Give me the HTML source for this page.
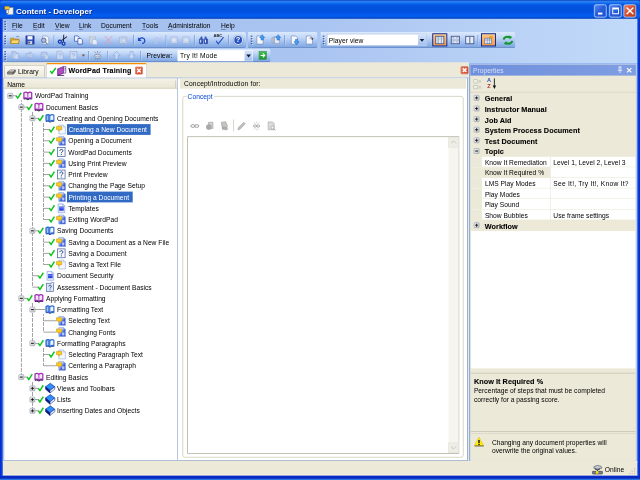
<!DOCTYPE html>
<html><head><meta charset="utf-8"><title>Content - Developer</title><style>
html,body{margin:0;padding:0;}
body{width:640px;height:480px;overflow:hidden;position:relative;background:#0a3fd0;}
#w{position:absolute;left:0;top:0;width:640px;height:480px;overflow:hidden;filter:blur(0.3px);}
#s{position:absolute;left:0;top:0;width:6400px;height:4800px;transform:scale(0.1);transform-origin:0 0;font-family:"Liberation Sans",sans-serif;color:#000;}

#s{font-size:67px;}
.a{position:absolute;}
.t{position:absolute;white-space:nowrap;line-height:100px;height:100px;}
.b{font-weight:bold;letter-spacing:2.8px;}
svg{position:absolute;overflow:visible;}
</style></head><body><div id="w"><div id="s">
<div class="a" style="left:0px;top:0px;width:6400px;height:4800px;background:#0a46dc;"></div>
<div class="a" style="left:0px;top:0px;width:6400px;height:187.5px;background:linear-gradient(to bottom,#0a48b8 0%,#2c7ef4 8%,#2478f6 12%,#0e68ee 18%,#045ce6 24%,#0252de 32%,#0250de 58%,#0356e8 72%,#055ef0 84%,#0458e2 91%,#0348c8 96%,#023cae 100%);border-radius:40px 40px 0 0;"></div>
<div class="t " style="left:160px;top:64px;font-weight:bold;font-size:80px;color:#fff;text-shadow:6px 6px 5px #0a2a80;letter-spacing:0px;">Content - Developer</div>
<svg style="left:44px;top:54px" width="96" height="96" viewBox="0 0 11 11"><rect x="3.5" y="2.5" width="6.5" height="8" fill="#f4f4ee" stroke="#8a8a80" stroke-width="0.6"/><rect x="0.5" y="1" width="5" height="4" fill="#f2c438" stroke="#a07a10" stroke-width="0.5"/><rect x="2" y="5" width="2.4" height="4" fill="#e8e8f4" stroke="#556" stroke-width="0.5"/></svg>
<div class="a" style="left:5940px;top:44px;width:126px;height:131px;background:linear-gradient(135deg,#5a8cf2 0%,#2a5fdc 45%,#1f4fc8 100%);border:7px solid #e8eefc;border-radius:20px;box-sizing:border-box;"></div>
<div class="a" style="left:6090px;top:44px;width:126px;height:131px;background:linear-gradient(135deg,#5a8cf2 0%,#2a5fdc 45%,#1f4fc8 100%);border:7px solid #e8eefc;border-radius:20px;box-sizing:border-box;"></div>
<div class="a" style="left:6235px;top:44px;width:126px;height:131px;background:linear-gradient(135deg,#e9866a 0%,#d8512c 45%,#c23a14 100%);border:7px solid #e8eefc;border-radius:20px;box-sizing:border-box;"></div>
<div class="a" style="left:5980px;top:126px;width:44px;height:19px;background:#fff;"></div>
<div class="a" style="left:6123px;top:76px;width:66px;height:66px;border:9px solid #fff;border-top-width:19px;box-sizing:border-box;"></div>
<svg style="left:6263px;top:72px" width="74" height="74" viewBox="0 0 8 8"><path d="M0.8 0.8 L7.2 7.2 M7.2 0.8 L0.8 7.2" stroke="#fff" stroke-width="1.5" stroke-linecap="round"/></svg>
<div class="a" style="left:25px;top:187.5px;width:6351px;height:445px;background:linear-gradient(to right,#a2beef 0%,#aac5f1 50%,#c2daf9 100%);"></div>
<div class="a" style="left:51px;top:217.5px;width:15px;height:11px;background:rgba(255,255,255,0.85);"></div>
<div class="a" style="left:44px;top:211.5px;width:16px;height:11px;background:#27418a;"></div>
<div class="a" style="left:51px;top:242.5px;width:15px;height:11px;background:rgba(255,255,255,0.85);"></div>
<div class="a" style="left:44px;top:236.5px;width:16px;height:11px;background:#27418a;"></div>
<div class="a" style="left:51px;top:267.5px;width:15px;height:11px;background:rgba(255,255,255,0.85);"></div>
<div class="a" style="left:44px;top:261.5px;width:16px;height:11px;background:#27418a;"></div>
<div class="a" style="left:51px;top:292.5px;width:15px;height:11px;background:rgba(255,255,255,0.85);"></div>
<div class="a" style="left:44px;top:286.5px;width:16px;height:11px;background:#27418a;"></div>
<div class="t" style="left:120px;top:203px;"><span style="border-bottom:5px solid #445;display:inline-block;line-height:74px">F</span>ile</div>
<div class="t" style="left:330px;top:203px;"><span style="border-bottom:5px solid #445;display:inline-block;line-height:74px">E</span>dit</div>
<div class="t" style="left:550px;top:203px;"><span style="border-bottom:5px solid #445;display:inline-block;line-height:74px">V</span>iew</div>
<div class="t" style="left:790px;top:203px;"><span style="border-bottom:5px solid #445;display:inline-block;line-height:74px">L</span>ink</div>
<div class="t" style="left:1010px;top:203px;">D<span style="border-bottom:5px solid #445;display:inline-block;line-height:74px">o</span>cument</div>
<div class="t" style="left:1420px;top:203px;"><span style="border-bottom:5px solid #445;display:inline-block;line-height:74px">T</span>ools</div>
<div class="t" style="left:1680px;top:203px;"><span style="border-bottom:5px solid #445;display:inline-block;line-height:74px">A</span>dministration</div>
<div class="t" style="left:2210px;top:203px;"><span style="border-bottom:5px solid #445;display:inline-block;line-height:74px">H</span>elp</div>
<div class="a" style="left:25px;top:320px;width:2435px;height:160px;background:linear-gradient(to bottom,#dbe9fd 0%,#c3d8f8 35%,#9dbdee 70%,#7fa7e2 100%);border-radius:0 20px 20px 0;border-bottom:8px solid #5a7fc0;box-sizing:border-box;"></div>
<div class="a" style="left:51px;top:362.5px;width:15px;height:11px;background:rgba(255,255,255,0.85);"></div>
<div class="a" style="left:44px;top:356.5px;width:16px;height:11px;background:#27418a;"></div>
<div class="a" style="left:51px;top:387.5px;width:15px;height:11px;background:rgba(255,255,255,0.85);"></div>
<div class="a" style="left:44px;top:381.5px;width:16px;height:11px;background:#27418a;"></div>
<div class="a" style="left:51px;top:412.5px;width:15px;height:11px;background:rgba(255,255,255,0.85);"></div>
<div class="a" style="left:44px;top:406.5px;width:16px;height:11px;background:#27418a;"></div>
<div class="a" style="left:51px;top:437.5px;width:15px;height:11px;background:rgba(255,255,255,0.85);"></div>
<div class="a" style="left:44px;top:431.5px;width:16px;height:11px;background:#27418a;"></div>
<div class="a" style="left:537px;top:350px;width:7px;height:100px;background:#6a8ccc;"></div>
<div class="a" style="left:544px;top:355px;width:6px;height:100px;background:rgba(240,246,255,0.55);"></div>
<div class="a" style="left:1332px;top:350px;width:7px;height:100px;background:#6a8ccc;"></div>
<div class="a" style="left:1339px;top:355px;width:6px;height:100px;background:rgba(240,246,255,0.55);"></div>
<div class="a" style="left:1657px;top:350px;width:7px;height:100px;background:#6a8ccc;"></div>
<div class="a" style="left:1664px;top:355px;width:6px;height:100px;background:rgba(240,246,255,0.55);"></div>
<div class="a" style="left:1941px;top:350px;width:7px;height:100px;background:#6a8ccc;"></div>
<div class="a" style="left:1948px;top:355px;width:6px;height:100px;background:rgba(240,246,255,0.55);"></div>
<div class="a" style="left:2282px;top:350px;width:7px;height:100px;background:#6a8ccc;"></div>
<div class="a" style="left:2289px;top:355px;width:6px;height:100px;background:rgba(240,246,255,0.55);"></div>
<div class="a" style="left:2480px;top:320px;width:695px;height:160px;background:linear-gradient(to bottom,#dbe9fd 0%,#c3d8f8 35%,#9dbdee 70%,#7fa7e2 100%);border-radius:0 20px 20px 0;border-bottom:8px solid #5a7fc0;box-sizing:border-box;"></div>
<div class="a" style="left:2515px;top:362.5px;width:15px;height:11px;background:rgba(255,255,255,0.85);"></div>
<div class="a" style="left:2508px;top:356.5px;width:16px;height:11px;background:#27418a;"></div>
<div class="a" style="left:2515px;top:387.5px;width:15px;height:11px;background:rgba(255,255,255,0.85);"></div>
<div class="a" style="left:2508px;top:381.5px;width:16px;height:11px;background:#27418a;"></div>
<div class="a" style="left:2515px;top:412.5px;width:15px;height:11px;background:rgba(255,255,255,0.85);"></div>
<div class="a" style="left:2508px;top:406.5px;width:16px;height:11px;background:#27418a;"></div>
<div class="a" style="left:2515px;top:437.5px;width:15px;height:11px;background:rgba(255,255,255,0.85);"></div>
<div class="a" style="left:2508px;top:431.5px;width:16px;height:11px;background:#27418a;"></div>
<div class="a" style="left:2844px;top:350px;width:7px;height:100px;background:#6a8ccc;"></div>
<div class="a" style="left:2851px;top:355px;width:6px;height:100px;background:rgba(240,246,255,0.55);"></div>
<div class="a" style="left:3204px;top:320px;width:1950px;height:160px;background:linear-gradient(to bottom,#dbe9fd 0%,#c3d8f8 35%,#9dbdee 70%,#7fa7e2 100%);border-radius:0 20px 20px 0;border-bottom:8px solid #5a7fc0;box-sizing:border-box;"></div>
<div class="a" style="left:3235px;top:362.5px;width:15px;height:11px;background:rgba(255,255,255,0.85);"></div>
<div class="a" style="left:3228px;top:356.5px;width:16px;height:11px;background:#27418a;"></div>
<div class="a" style="left:3235px;top:387.5px;width:15px;height:11px;background:rgba(255,255,255,0.85);"></div>
<div class="a" style="left:3228px;top:381.5px;width:16px;height:11px;background:#27418a;"></div>
<div class="a" style="left:3235px;top:412.5px;width:15px;height:11px;background:rgba(255,255,255,0.85);"></div>
<div class="a" style="left:3228px;top:406.5px;width:16px;height:11px;background:#27418a;"></div>
<div class="a" style="left:3235px;top:437.5px;width:15px;height:11px;background:rgba(255,255,255,0.85);"></div>
<div class="a" style="left:3228px;top:431.5px;width:16px;height:11px;background:#27418a;"></div>
<div class="a" style="left:4776px;top:350px;width:7px;height:100px;background:#6a8ccc;"></div>
<div class="a" style="left:4783px;top:355px;width:6px;height:100px;background:rgba(240,246,255,0.55);"></div>
<div class="a" style="left:25px;top:486px;width:2681px;height:134px;background:linear-gradient(to bottom,#dbe9fd 0%,#c3d8f8 35%,#9dbdee 70%,#7fa7e2 100%);border-radius:0 20px 20px 0;border-bottom:8px solid #5a7fc0;box-sizing:border-box;"></div>
<div class="a" style="left:51px;top:517.5px;width:15px;height:11px;background:rgba(255,255,255,0.85);"></div>
<div class="a" style="left:44px;top:511.5px;width:16px;height:11px;background:#27418a;"></div>
<div class="a" style="left:51px;top:542.5px;width:15px;height:11px;background:rgba(255,255,255,0.85);"></div>
<div class="a" style="left:44px;top:536.5px;width:16px;height:11px;background:#27418a;"></div>
<div class="a" style="left:51px;top:567.5px;width:15px;height:11px;background:rgba(255,255,255,0.85);"></div>
<div class="a" style="left:44px;top:561.5px;width:16px;height:11px;background:#27418a;"></div>
<div class="a" style="left:51px;top:592.5px;width:15px;height:11px;background:rgba(255,255,255,0.85);"></div>
<div class="a" style="left:44px;top:586.5px;width:16px;height:11px;background:#27418a;"></div>
<div class="a" style="left:882px;top:510px;width:7px;height:90px;background:#6a8ccc;"></div>
<div class="a" style="left:889px;top:515px;width:6px;height:90px;background:rgba(240,246,255,0.55);"></div>
<div class="a" style="left:1070px;top:510px;width:7px;height:90px;background:#6a8ccc;"></div>
<div class="a" style="left:1077px;top:515px;width:6px;height:90px;background:rgba(240,246,255,0.55);"></div>
<div class="a" style="left:1401px;top:510px;width:7px;height:90px;background:#6a8ccc;"></div>
<div class="a" style="left:1408px;top:515px;width:6px;height:90px;background:rgba(240,246,255,0.55);"></div>
<svg style="left:100px;top:350px" width="100" height="100" viewBox="0 0 16 16"><path d="M1 5h5l1 1.5h7v7H1z" fill="#e8b02c" stroke="#9a6e10" stroke-width="0.8"/><path d="M3 8h12l-2 5.5H1z" fill="#fbdc6a" stroke="#9a6e10" stroke-width="0.8"/><path d="M10 3c2-1.5 3.5-1 4.5 0.5" stroke="#446" fill="none" stroke-width="0.9"/></svg>
<svg style="left:250px;top:350px" width="100" height="100" viewBox="0 0 16 16"><rect x="1.5" y="1.5" width="13" height="13" fill="#2b49b8" stroke="#10206a" stroke-width="0.9"/><rect x="4" y="1.8" width="8" height="5.4" fill="#f4f6ff"/><rect x="4.5" y="9.5" width="7" height="5" fill="#c8cce0"/><rect x="5.5" y="10.5" width="2" height="3" fill="#223"/></svg>
<svg style="left:400px;top:350px" width="100" height="100" viewBox="0 0 16 16"><path d="M4 1.5h7l3 3v10H4z" fill="#eef2fa" stroke="#7a88a8" stroke-width="0.8"/><circle cx="6" cy="8.500" r="3.600" fill="#a8bcdc" stroke="#4c5c84" stroke-width="1.200"/><path d="M8.6 11.2l3.4 3.4" stroke="#56688c" stroke-width="1.6"/></svg>
<svg style="left:577.5px;top:347.5px" width="105" height="105" viewBox="0 0 16 16"><g transform="rotate(28 8 8)"><path d="M10.800 0.500L6.200 10M5.200 0.500l4.600 9.500" stroke="#20243c" stroke-width="1.500" fill="none"/><circle cx="4.800" cy="12.400" r="2.300" fill="none" stroke="#1034b4" stroke-width="1.800"/><circle cx="11.200" cy="12.400" r="2.300" fill="none" stroke="#1034b4" stroke-width="1.800"/></g></svg>
<svg style="left:735px;top:350px" width="100" height="100" viewBox="0 0 16 16"><path d="M1.500 1.500h5.500l2 2V10H1.500z" fill="#f2f6ff" stroke="#2c4cac" stroke-width="1.100"/><path d="M7 5.500h5l2.200 2.200V14.500H7z" fill="#f2f6ff" stroke="#2c4cac" stroke-width="1.100"/></svg>
<svg style="left:880px;top:350px" width="100" height="100" viewBox="0 0 16 16"><rect x="2" y="3" width="10" height="11" fill="#c9d3e6" stroke="#9fb0d0" stroke-width="0.9"/><rect x="5" y="1.5" width="4" height="3" fill="#d8d2c0"/><path d="M7 7h5l2.4 2.2V15H7z" fill="#e6ecf8" stroke="#a4b4d4" stroke-width="0.9"/></svg>
<svg style="left:1035px;top:350px" width="100" height="100" viewBox="0 0 16 16"><path d="M2 1.500l12 13M14 1.500L2 14.500" stroke="#e49ab0" stroke-width="1.500"/></svg>
<svg style="left:1185px;top:350px" width="100" height="100" viewBox="0 0 16 16"><rect x="1.5" y="3" width="12" height="10.5" rx="1" fill="#c4d2ea" stroke="#9cb0d4" stroke-width="0.9"/><circle cx="8" cy="8.5" r="3" fill="#dbe5f5" stroke="#9cb0d4" stroke-width="0.9"/><rect x="10" y="1.5" width="3" height="2" fill="#b8c8e4"/></svg>
<svg style="left:1370px;top:350px" width="100" height="100" viewBox="0 0 16 16"><path d="M3 7.5C6 3 12 4 12.5 8.5c.3 3-2 5-4.5 5" fill="none" stroke="#1a46c8" stroke-width="2"/><path d="M1.5 3.5v6h6z" fill="#1a46c8"/></svg>
<svg style="left:1520px;top:350px" width="100" height="100" viewBox="0 0 16 16"><path d="M13 7.5C10 3 4 4 3.5 8.5c-.3 3 2 5 4.5 5" fill="none" stroke="#b4c6e8" stroke-width="1.8"/><path d="M14.5 3.5v6h-6z" fill="#b4c6e8"/></svg>
<svg style="left:1690px;top:350px" width="100" height="100" viewBox="0 0 16 16"><rect x="3" y="3" width="10" height="10" fill="#c8d6ee" stroke="#a2b6da" stroke-width="0.9"/><path d="M5.5 8h5M8 5.5v5" stroke="#f4f8ff" stroke-width="1.2"/></svg>
<svg style="left:1810px;top:350px" width="100" height="100" viewBox="0 0 16 16"><rect x="3" y="3" width="10" height="10" fill="#c8d6ee" stroke="#a2b6da" stroke-width="0.9"/><path d="M5.5 8h5" stroke="#f4f8ff" stroke-width="1.2"/></svg>
<svg style="left:1985px;top:350px" width="100" height="100" viewBox="0 0 16 16"><path d="M2.500 6l1.200-3.500h2.300l.500 3.500zM9.500 6l.500-3.500h2.300L13.500 6z" fill="#3c5cc0"/><rect x="1.500" y="6" width="5.500" height="8" rx="1" fill="#2a4cb4" stroke="#182c7c" stroke-width="0.600"/><rect x="9" y="6" width="5.500" height="8" rx="1" fill="#2a4cb4" stroke="#182c7c" stroke-width="0.600"/><rect x="6.500" y="6.500" width="3" height="3" fill="#5878d0"/><rect x="2.800" y="7.500" width="1.600" height="4.800" fill="#f0f4ff"/><rect x="10.300" y="7.500" width="1.600" height="4.800" fill="#f0f4ff"/></svg>
<div class="t" style="left:2135px;top:332px;font-size:42px;font-weight:bold;line-height:50px;height:50px;color:#223;letter-spacing:-1px">ABC</div>
<svg style="left:2145px;top:363px" width="100" height="100" viewBox="0 0 16 16"><path d="M2.500 7.500l3.500 4.500L14.500 1.500" fill="none" stroke="#2a52cc" stroke-width="1.900"/></svg>
<svg style="left:2330px;top:348px" width="104" height="104" viewBox="0 0 16 16"><circle cx="8" cy="8" r="8.200" fill="#7c8cb4"/><circle cx="8" cy="8" r="7.400" fill="#eef2fc"/><circle cx="8" cy="8" r="6" fill="#2450c8"/></svg>
<div class="t" style="left:2358px;top:348px;font-size:75px;font-weight:bold;color:#fff;">?</div>
<svg style="left:2553px;top:350px" width="100" height="100" viewBox="0 0 16 16"><path d="M2.5 1.5h7l3 3v10h-10z" fill="#f4f7fd" stroke="#6a7ea8" stroke-width="0.9"/><path d="M11 -0.5L15 4.2h-2.300V8h-3.400V4.200H7z" fill="#3ea4f4" stroke="#1858c0" stroke-width="0.800"/></svg>
<svg style="left:2713px;top:350px" width="100" height="100" viewBox="0 0 16 16"><path d="M1 4.5l4-1.5v10l-4-1.5z" fill="#b8c4d8" stroke="#7c88a4" stroke-width="0.7"/><path d="M5 2.5h6l2 2v9H5z" fill="#e4eaf6" stroke="#7c88a4" stroke-width="0.8"/><path d="M11 -0.5L15 4.2h-2.300V8h-3.400V4.200H7z" fill="#3ea4f4" stroke="#1858c0" stroke-width="0.800"/></svg>
<svg style="left:2897px;top:350px" width="100" height="100" viewBox="0 0 16 16"><path d="M2.5 1.5h7l3 3v10h-10z" fill="#f4f7fd" stroke="#6a7ea8" stroke-width="0.9"/><path d="M11 15.500L15 10.800h-2.300V7h-3.400v3.800H7z" fill="#3ea4f4" stroke="#1858c0" stroke-width="0.800"/></svg>
<svg style="left:3047px;top:350px" width="100" height="100" viewBox="0 0 16 16"><path d="M2.5 1.5h7l3 3v10h-10z" fill="#f4f7fd" stroke="#6a7ea8" stroke-width="0.9"/><path d="M8 5.5c2-2 4.5-1 4.5 1.5M12.5 7l-2-.6M12.5 7l.8-2" stroke="#223" stroke-width="1.1" fill="none"/></svg>
<div class="a" style="left:3268px;top:337px;width:997px;height:122px;background:#fff;border:6px solid #9ab4e0;box-sizing:border-box;"></div>
<div class="t " style="left:3287px;top:352px;letter-spacing:0.5px">Player view</div>
<div class="a" style="left:4180px;top:343px;width:80px;height:110px;background:linear-gradient(to bottom,#d6e4fb,#a3c0ee);"></div>
<svg style="left:4196px;top:390px" width="48" height="28" viewBox="0 0 10 6"><path d="M0 0h10L5 6z" fill="#101830"/></svg>
<div class="a" style="left:4323px;top:333px;width:150px;height:131px;background:linear-gradient(to bottom,#fdc887,#f99a44);border:9px solid #0a1c80;box-sizing:border-box;"></div>
<div class="a" style="left:4810px;top:333px;width:150px;height:131px;background:linear-gradient(to bottom,#fdc887,#f99a44);border:9px solid #0a1c80;box-sizing:border-box;"></div>
<svg style="left:4348px;top:350px" width="100" height="100" viewBox="0 0 16 16"><rect x="1.500" y="2" width="13" height="12" fill="#e4ecf8" stroke="#3c4e80" stroke-width="1.300"/><path d="M5.5 2v12M10.5 2v12" stroke="#5c6e98" stroke-width="0.9"/><path d="M3 5h1.5M3 7h1.5M3 9h1.5M7 5h2M7 7h2M12 5h1.5M12 7h1.5" stroke="#8a9cc0" stroke-width="0.7"/></svg>
<svg style="left:4503px;top:350px" width="100" height="100" viewBox="0 0 16 16"><rect x="1.500" y="2" width="13" height="12" fill="#e4ecf8" stroke="#3c4e80" stroke-width="1.300"/><path d="M1.5 8h13" stroke="#5c6e98" stroke-width="1"/><path d="M3 4.5h4M9 4.5h4M3 11h4M9 11h4" stroke="#6a80b0" stroke-width="0.9"/></svg>
<svg style="left:4648px;top:350px" width="100" height="100" viewBox="0 0 16 16"><rect x="1.500" y="2" width="13" height="12" fill="#e4ecf8" stroke="#3c4e80" stroke-width="1.300"/><path d="M8 2v12" stroke="#5c6e98" stroke-width="1.6"/></svg>
<svg style="left:4835px;top:350px" width="100" height="100" viewBox="0 0 16 16"><rect x="2" y="5" width="11" height="9" fill="#e6ecf6" stroke="#5c6e98" stroke-width="1"/><path d="M2 8h11M6 5v9M9.5 5v9" stroke="#5c6e98" stroke-width="0.8"/><path d="M9 4l3-2.6 3 2.2-2 2.4z" fill="#f0b020" stroke="#a06c08" stroke-width="0.6"/></svg>
<svg style="left:5021.5px;top:344.5px" width="115" height="115" viewBox="0 0 16 16"><path d="M2 7c.500-3.500 5-5 8.500-2.500" fill="none" stroke="#10962c" stroke-width="2.800"/><path d="M9 1.5l5 1.5-3.5 4z" fill="#149a30"/><path d="M14 9c-.5 3.5-5 5-8.5 2.500" fill="none" stroke="#10962c" stroke-width="2.800"/><path d="M7 14.500l-5-1.500 3.500-4z" fill="#149a30"/></svg>
<svg style="left:105px;top:503px" width="100" height="100" viewBox="0 0 16 16"><path d="M2 2h6l2 2v9H2z" fill="#b9cbea" stroke="#8ea8dc" stroke-width="0.9"/><path d="M8 5h5v9H6" fill="#cbd9f1" stroke="#8ea8dc" stroke-width="0.9"/></svg>
<svg style="left:250px;top:503px" width="100" height="100" viewBox="0 0 16 16"><path d="M2 5h6V2l6 6-6 6v-3H2z" fill="#b9cbea" stroke="#8ea8dc" stroke-width="0.9"/></svg>
<svg style="left:400px;top:503px" width="100" height="100" viewBox="0 0 16 16"><path d="M2 3h9v7H7l-3 3v-3H2z" fill="#b9cbea" stroke="#8ea8dc" stroke-width="0.9"/><path d="M9 6l4 2v6H8" fill="#cbd9f1" stroke="#8ea8dc" stroke-width="0.8"/></svg>
<svg style="left:550px;top:503px" width="100" height="100" viewBox="0 0 16 16"><path d="M3 1.500h7l3 3v10H3z" fill="#cbd9f1" stroke="#8ea8dc" stroke-width="0.9"/><path d="M6 7c0-2.500 4-2.500 4 0 0 1.500-2 1.500-2 3M8 12v1" stroke="#8ea8dc" stroke-width="1.2" fill="none"/></svg>
<svg style="left:685px;top:503px" width="100" height="100" viewBox="0 0 16 16"><rect x="2.500" y="2" width="11" height="12" fill="#cbd9f1" stroke="#8ea8dc" stroke-width="0.9"/><path d="M6 7c0-2.500 4-2.500 4 0 0 1.500-2 1.500-2 3M8 12v1" stroke="#8ea8dc" stroke-width="1.2" fill="none"/></svg>
<svg style="left:816px;top:545px" width="36" height="22" viewBox="0 0 10 6"><path d="M0 0h10L5 6z" fill="#7a6040"/></svg>
<svg style="left:925px;top:503px" width="100" height="100" viewBox="0 0 16 16"><path d="M3 2l3 3M13 2l-3 3M8 1v3" stroke="#5a6a8c" stroke-width="0.9"/><ellipse cx="8" cy="9.500" rx="5.500" ry="3" fill="#e8eef8" stroke="#56688c" stroke-width="0.9"/><path d="M4 9.500h8M5 13l-1.500 2M11 13l1.500 2M8 13.500v2" stroke="#56688c" stroke-width="0.9"/></svg>
<svg style="left:1115px;top:503px" width="100" height="100" viewBox="0 0 16 16"><path d="M8 1.500L14 8h-3.500v6h-5V8H2z" fill="#c6d8f4" stroke="#8ea8dc" stroke-width="1"/></svg>
<svg style="left:1265px;top:503px" width="100" height="100" viewBox="0 0 16 16"><path d="M8 14.500L14 8h-3.500V2h-5v6H2z" fill="#c6d8f4" stroke="#8ea8dc" stroke-width="1"/></svg>
<div class="t " style="left:1466px;top:510px;">Preview:</div>
<div class="a" style="left:1775px;top:502px;width:755px;height:110px;background:#fff;"></div>
<div class="t " style="left:1800px;top:506px;letter-spacing:1.5px">Try It! Mode</div>
<div class="a" style="left:2445px;top:506px;width:80px;height:102px;background:linear-gradient(to bottom,#d6e4fb,#a3c0ee);"></div>
<svg style="left:2462px;top:546px" width="48" height="28" viewBox="0 0 10 6"><path d="M0 0h10L5 6z" fill="#101830"/></svg>
<div class="a" style="left:2588px;top:512px;width:80px;height:84px;background:linear-gradient(to bottom,#3cc04a,#1a9a2a);border:5px solid #127a20;box-sizing:border-box;"></div>
<svg style="left:2600px;top:526px" width="56" height="56" viewBox="0 0 10 10"><path d="M1 5h7M5 1.500L8.500 5 5 8.500" stroke="#fff" stroke-width="1.800" fill="none"/></svg>
<div class="a" style="left:25px;top:623px;width:4667px;height:4000px;background:#ece9d8;"></div>
<div class="a" style="left:4691px;top:632px;width:1685px;height:4000px;background:#b4cdf4;"></div>
<div class="a" style="left:4691px;top:640px;width:12px;height:3970px;background:#86aee6;"></div>
<div class="a" style="left:25px;top:777px;width:4660px;height:8px;background:#9db6dc;"></div>
<div class="a" style="left:40px;top:650px;width:410px;height:126px;background:linear-gradient(to bottom,#fbfaf6,#ece9d8);border:6px solid #b8b8a8;border-bottom:none;border-radius:15px 15px 0 0;box-sizing:border-box;"></div>
<svg style="left:70px;top:671px" width="90" height="90" viewBox="0 0 16 16"><path d="M1 9l5-4h9l-4 4z" fill="#d8d8d8" stroke="#444" stroke-width="0.9"/><path d="M1 9h10v3.500H1z" fill="#9a9a9a" stroke="#333" stroke-width="0.9"/><path d="M11 9l4-4v3.500l-4 4z" fill="#666" stroke="#333" stroke-width="0.7"/></svg>
<div class="t " style="left:180px;top:663px;">Library</div>
<div class="a" style="left:460px;top:630px;width:1008px;height:150px;background:#fff;border:6px solid #9aa8c0;border-bottom:none;border-top:15px solid #f79000;border-radius:15px 15px 0 0;box-sizing:border-box;"></div>
<svg style="left:495px;top:671px" width="70" height="70" viewBox="0 0 16 16"><path d="M1.500 8.500l4 5.500L14.500 2" fill="none" stroke="#0cc41c" stroke-width="3.400"/></svg>
<svg style="left:562.5px;top:655.5px" width="105" height="105" viewBox="0 0 16 16"><path d="M2 5l9-3.500v10L2 15z" fill="#b04cc8" stroke="#5a1470" stroke-width="1"/><path d="M11 1.500h3.500v10H11z" fill="#ecdcf2" stroke="#5a1470" stroke-width="0.8"/><path d="M2 15h10" stroke="#3a0a50" stroke-width="1.200"/><path d="M12.500 4h2M12.500 6.500h2" stroke="#2a64c8" stroke-width="1"/></svg>
<div class="t b" style="left:685px;top:658px;font-size:71px;letter-spacing:1.4px;-webkit-text-stroke:1px #000">WordPad Training</div>
<div class="a" style="left:1352px;top:668px;width:76px;height:76px;background:linear-gradient(135deg,#f0704c,#d83818);border:5px solid #b02808;box-sizing:border-box;border-radius:8px;"></div>
<svg style="left:1367px;top:683px" width="46" height="46" viewBox="0 0 8 8"><path d="M0.800 0.800L7.200 7.200M7.200 0.800L0.800 7.200" stroke="#fff" stroke-width="2.600"/></svg>
<div class="a" style="left:4608px;top:664px;width:76px;height:76px;background:linear-gradient(135deg,#f0704c,#d83818);border:5px solid #b02808;box-sizing:border-box;border-radius:8px;"></div>
<svg style="left:4623px;top:679px" width="46" height="46" viewBox="0 0 8 8"><path d="M0.800 0.800L7.200 7.200M7.200 0.800L0.800 7.200" stroke="#fff" stroke-width="2.600"/></svg>
<div class="a" style="left:34px;top:777px;width:1744px;height:3834px;background:#fff;border:8px solid #8ea6cc;box-sizing:border-box;"></div>
<div class="a" style="left:41px;top:785px;width:1730px;height:104px;background:linear-gradient(to bottom,#f3f1e6,#ebe8d7 80%,#d8d4c0);"></div>
<div class="a" style="left:1754px;top:805px;width:6px;height:75px;background:#c5c2b0;"></div>
<div class="t " style="left:72px;top:793px;">Name</div>
<div class="a" style="left:1778px;top:776px;width:2901px;height:3835px;background:#fff;border-top:8px solid #a0b8e0;border-right:8px solid #8a9cb8;border-bottom:8px solid #8ea2c0;box-sizing:border-box;"></div>
<div class="a" style="left:1800px;top:784px;width:2860px;height:103px;background:#ece9d8;"></div>
<div class="t " style="left:1840px;top:786px;letter-spacing:1.3px">Concept/Introduction for:</div>
<div class="a" style="left:1824px;top:960px;width:2812px;height:3616px;border:7px solid #c6c6ae;border-radius:25px;box-sizing:border-box;"></div>
<div class="a" style="left:1865px;top:940px;width:275px;height:50px;background:#fff;"></div>
<div class="t " style="left:1876px;top:914px;color:#0046d5">Concept</div>
<svg style="left:1897.5px;top:1210px" width="100" height="100" viewBox="0 0 16 16"><ellipse cx="5" cy="8" rx="3.400" ry="2.200" fill="none" stroke="#9a9a9a" stroke-width="1.500"/><ellipse cx="11" cy="8" rx="3.400" ry="2.200" fill="none" stroke="#9a9a9a" stroke-width="1.500"/></svg>
<svg style="left:2047.5px;top:1210px" width="100" height="100" viewBox="0 0 16 16"><path d="M6 2h7v10H6z" fill="#d0d0d0" stroke="#9a9a9a" stroke-width="0.9"/><circle cx="6.500" cy="9.500" r="4.500" fill="#a8a8a8"/></svg>
<svg style="left:2194px;top:1210px" width="100" height="100" viewBox="0 0 16 16"><path d="M3 2l7-1 3 7-2 4-6 1z" fill="#c4c4c4" stroke="#9a9a9a" stroke-width="0.9"/><path d="M5 9l8 2-1 3.500-7-1.500z" fill="#b0b0b0" stroke="#9a9a9a" stroke-width="0.8"/></svg>
<div class="a" style="left:2330px;top:1195px;width:7px;height:120px;background:#c8c8b8;"></div>
<svg style="left:2366px;top:1210px" width="100" height="100" viewBox="0 0 16 16"><path d="M2 14l1-3.500L11.500 2l2.500 2.500L5.500 13z" fill="#c0c0c0" stroke="#9a9a9a" stroke-width="0.9"/></svg>
<svg style="left:2516px;top:1210px" width="100" height="100" viewBox="0 0 16 16"><path d="M4 2l2 2.500M12 2l-2 2.500M4 14l2-2.500M12 14l-2-2.500M8 1v2.500M8 15v-2.500" stroke="#b4b4b4" stroke-width="0.9"/><ellipse cx="5.500" cy="8" rx="2.600" ry="1.800" fill="none" stroke="#9a9a9a" stroke-width="1.300"/><ellipse cx="10.500" cy="8" rx="2.600" ry="1.800" fill="none" stroke="#9a9a9a" stroke-width="1.300"/></svg>
<svg style="left:2663px;top:1210px" width="100" height="100" viewBox="0 0 16 16"><path d="M3 1.500h7l2.500 2.500v10H3z" fill="#dcdcdc" stroke="#9a9a9a" stroke-width="0.9"/><circle cx="10" cy="10.500" r="2.600" fill="#eee" stroke="#9a9a9a" stroke-width="1"/><path d="M12 12.500l2.500 2.500" stroke="#9a9a9a" stroke-width="1.400"/></svg>
<div class="a" style="left:1872px;top:1363px;width:2720px;height:3175px;background:#fff;border:8px solid #b4b4a0;box-sizing:border-box;"></div>
<div class="a" style="left:4485px;top:1371px;width:100px;height:3159px;background:#f6f5f0;"></div>
<div class="a" style="left:4485px;top:1371px;width:100px;height:103px;background:#efeee6;border:5px solid #e0dfd4;box-sizing:border-box;"></div>
<div class="a" style="left:4485px;top:4427px;width:100px;height:103px;background:#efeee6;border:5px solid #e0dfd4;box-sizing:border-box;"></div>
<svg style="left:4507px;top:1403px" width="56" height="34" viewBox="0 0 10 6"><path d="M0.500 5.500L5 1l4.500 4.500" stroke="#c2c1b6" stroke-width="1.500" fill="none"/></svg>
<svg style="left:4507px;top:4463px" width="56" height="34" viewBox="0 0 10 6"><path d="M0.500 0.500L5 5l4.500-4.500" stroke="#c2c1b6" stroke-width="1.500" fill="none"/></svg>
<div class="a" style="left:209px;top:1003px;width:8px;height:2767.5px;background:repeating-linear-gradient(to bottom,rgba(96,96,96,0.72) 0,rgba(96,96,96,0.72) 19px,transparent 19px,transparent 25px);"></div>
<div class="a" style="left:320px;top:1115.5px;width:8px;height:1755px;background:repeating-linear-gradient(to bottom,rgba(96,96,96,0.72) 0,rgba(96,96,96,0.72) 19px,transparent 19px,transparent 25px);"></div>
<div class="a" style="left:431px;top:1228px;width:8px;height:967.5px;background:repeating-linear-gradient(to bottom,rgba(96,96,96,0.72) 0,rgba(96,96,96,0.72) 19px,transparent 19px,transparent 25px);"></div>
<div class="a" style="left:431px;top:2353px;width:8px;height:292.5px;background:repeating-linear-gradient(to bottom,rgba(96,96,96,0.72) 0,rgba(96,96,96,0.72) 19px,transparent 19px,transparent 25px);"></div>
<div class="a" style="left:320px;top:3028px;width:8px;height:405px;background:repeating-linear-gradient(to bottom,rgba(96,96,96,0.72) 0,rgba(96,96,96,0.72) 19px,transparent 19px,transparent 25px);"></div>
<div class="a" style="left:431px;top:3140.5px;width:8px;height:180px;background:repeating-linear-gradient(to bottom,rgba(96,96,96,0.72) 0,rgba(96,96,96,0.72) 19px,transparent 19px,transparent 25px);"></div>
<div class="a" style="left:431px;top:3478px;width:8px;height:180px;background:repeating-linear-gradient(to bottom,rgba(96,96,96,0.72) 0,rgba(96,96,96,0.72) 19px,transparent 19px,transparent 25px);"></div>
<div class="a" style="left:320px;top:3815.5px;width:8px;height:292.5px;background:repeating-linear-gradient(to bottom,rgba(96,96,96,0.72) 0,rgba(96,96,96,0.72) 19px,transparent 19px,transparent 25px);"></div>
<div class="a" style="left:128px;top:954px;width:36px;height:8px;background:rgba(96,96,96,0.72);"></div>
<svg style="left:74px;top:930px" width="56" height="56" viewBox="0 0 9 9"><defs><linearGradient id="eg" x1="0" y1="0" x2="1" y2="1"><stop offset="0" stop-color="#fff"/><stop offset="1" stop-color="#c8c4b4"/></linearGradient></defs><rect x="0.5" y="0.5" width="8" height="8" rx="1" fill="url(#eg)" stroke="#8a9cb8" stroke-width="1"/><path d="M2.2 4.5h4.6" stroke="#000" stroke-width="1.5"/></svg>
<svg style="left:152px;top:921px" width="68" height="68" viewBox="0 0 16 16"><path d="M2 8.500l4 5.500L14 1.500" fill="none" stroke="#0cc41c" stroke-width="3.400"/></svg>
<svg style="left:226px;top:904px" width="104" height="104" viewBox="0 0 16 16"><path d="M2 3.6q3-2.2 6 .4 3-2.600 6-.4v8.400q-3-1.500-6 1-3-2.500-6-1z" fill="#f1eaf5" stroke="#a42cb6" stroke-width="1.900"/><path d="M8 4v9" stroke="#a42cb6" stroke-width="1.300"/><path d="M2 13.300q3-1.500 6 1 3-2.500 6-1" stroke="#24104e" stroke-width="1.500" fill="none"/></svg>
<div class="t " style="left:349px;top:910px;">WordPad Training</div>
<div class="a" style="left:239px;top:1066.5px;width:36px;height:8px;background:rgba(96,96,96,0.72);"></div>
<svg style="left:185px;top:1042.5px" width="56" height="56" viewBox="0 0 9 9"><defs><linearGradient id="eg" x1="0" y1="0" x2="1" y2="1"><stop offset="0" stop-color="#fff"/><stop offset="1" stop-color="#c8c4b4"/></linearGradient></defs><rect x="0.5" y="0.5" width="8" height="8" rx="1" fill="url(#eg)" stroke="#8a9cb8" stroke-width="1"/><path d="M2.2 4.5h4.6" stroke="#000" stroke-width="1.5"/></svg>
<svg style="left:263px;top:1033.5px" width="68" height="68" viewBox="0 0 16 16"><path d="M2 8.500l4 5.500L14 1.500" fill="none" stroke="#0cc41c" stroke-width="3.400"/></svg>
<svg style="left:337px;top:1016.5px" width="104" height="104" viewBox="0 0 16 16"><path d="M2 3.6q3-2.2 6 .4 3-2.600 6-.4v8.400q-3-1.500-6 1-3-2.500-6-1z" fill="#f1eaf5" stroke="#a42cb6" stroke-width="1.900"/><path d="M8 4v9" stroke="#a42cb6" stroke-width="1.300"/><path d="M2 13.300q3-1.500 6 1 3-2.500 6-1" stroke="#24104e" stroke-width="1.500" fill="none"/></svg>
<div class="t " style="left:460px;top:1022.5px;">Document Basics</div>
<div class="a" style="left:350px;top:1179px;width:36px;height:8px;background:rgba(96,96,96,0.72);"></div>
<svg style="left:296px;top:1155px" width="56" height="56" viewBox="0 0 9 9"><defs><linearGradient id="eg" x1="0" y1="0" x2="1" y2="1"><stop offset="0" stop-color="#fff"/><stop offset="1" stop-color="#c8c4b4"/></linearGradient></defs><rect x="0.5" y="0.5" width="8" height="8" rx="1" fill="url(#eg)" stroke="#8a9cb8" stroke-width="1"/><path d="M2.2 4.5h4.6" stroke="#000" stroke-width="1.5"/></svg>
<svg style="left:374px;top:1146px" width="68" height="68" viewBox="0 0 16 16"><path d="M2 8.500l4 5.500L14 1.500" fill="none" stroke="#0cc41c" stroke-width="3.400"/></svg>
<svg style="left:448px;top:1129px" width="104" height="104" viewBox="0 0 16 16"><path d="M2 3.600q3-2.200 6 .4 3-2.600 6-.4v8.400q-3-1.500-6 1-3-2.500-6-1z" fill="#f2f6fc" stroke="#2e6ad0" stroke-width="1.700"/><path d="M2 3.600q3-2.200 6 .4v9q-3-2.500-6-1z" fill="#4c8ae4" stroke="#2e6ad0" stroke-width="1"/><path d="M4 4.500v7" stroke="#dce8fa" stroke-width="1"/><path d="M2 13.300q3-1.500 6 1 3-2.500 6-1" stroke="#1a3a98" stroke-width="1.300" fill="none"/></svg>
<div class="t " style="left:571px;top:1135px;">Creating and Opening Documents</div>
<div class="a" style="left:435px;top:1291.5px;width:62px;height:8px;background:rgba(96,96,96,0.72);"></div>
<svg style="left:485px;top:1258.5px" width="68" height="68" viewBox="0 0 16 16"><path d="M2 8.500l4 5.500L14 1.500" fill="none" stroke="#0cc41c" stroke-width="3.400"/></svg>
<svg style="left:558.5px;top:1241px" width="105" height="105" viewBox="0 0 16 16"><path d="M4.500 1.500h7l3 3V15h-10z" fill="#f4f7fd" stroke="#9ab4e4" stroke-width="1"/><path d="M11.500 1.500v3h3" fill="none" stroke="#9ab4e4" stroke-width="0.800"/><path d="M1 3.500h8v5H6.500l-1.800 2.400V8.500H1z" fill="#f8d020" stroke="#c88a10" stroke-width="0.800"/></svg>
<div class="t" style="left:670px;top:1240.5px;height:108px;line-height:114px;background:#316ac5;color:#fff;padding:0 36px 0 14px;">Creating a New Document</div>
<div class="a" style="left:435px;top:1404px;width:62px;height:8px;background:rgba(96,96,96,0.72);"></div>
<svg style="left:485px;top:1371px" width="68" height="68" viewBox="0 0 16 16"><path d="M2 8.500l4 5.500L14 1.500" fill="none" stroke="#0cc41c" stroke-width="3.400"/></svg>
<svg style="left:558.5px;top:1353.5px" width="105" height="105" viewBox="0 0 16 16"><defs><linearGradient id="tg" x1="0" y1="0" x2="1" y2="1"><stop offset="0.250" stop-color="#eef3fc"/><stop offset="0.600" stop-color="#3a62e4"/><stop offset="1" stop-color="#1a36c4"/></linearGradient></defs><path d="M4.500 1.500h7l3 3V15h-10z" fill="url(#tg)" stroke="#7c9ce0" stroke-width="1"/><path d="M9.500 9h3.500v4.500H9.500z" fill="#dfe8fa" opacity="0.800"/><path d="M1 3.500h8v5H6.500l-1.800 2.400V8.500H1z" fill="#f8d020" stroke="#c88a10" stroke-width="0.800"/></svg>
<div class="t " style="left:682px;top:1360px;">Opening a Document</div>
<div class="a" style="left:435px;top:1516.5px;width:62px;height:8px;background:rgba(96,96,96,0.72);"></div>
<svg style="left:485px;top:1483.5px" width="68" height="68" viewBox="0 0 16 16"><path d="M2 8.500l4 5.500L14 1.500" fill="none" stroke="#0cc41c" stroke-width="3.400"/></svg>
<svg style="left:558.5px;top:1466px" width="105" height="105" viewBox="0 0 16 16"><rect x="2.500" y="1.500" width="11.500" height="13.500" fill="#f6f8fd" stroke="#46609c" stroke-width="1.100"/><path d="M6 6.500c0-3 4.600-3 4.600-.2 0 1.800-2.300 1.700-2.300 3.600M8.300 11.500v1.400" stroke="#16307a" stroke-width="1.400" fill="none"/></svg>
<div class="t " style="left:682px;top:1472.5px;">WordPad Documents</div>
<div class="a" style="left:435px;top:1629px;width:62px;height:8px;background:rgba(96,96,96,0.72);"></div>
<svg style="left:485px;top:1596px" width="68" height="68" viewBox="0 0 16 16"><path d="M2 8.500l4 5.500L14 1.500" fill="none" stroke="#0cc41c" stroke-width="3.400"/></svg>
<svg style="left:558.5px;top:1578.5px" width="105" height="105" viewBox="0 0 16 16"><defs><linearGradient id="tg" x1="0" y1="0" x2="1" y2="1"><stop offset="0.250" stop-color="#eef3fc"/><stop offset="0.600" stop-color="#3a62e4"/><stop offset="1" stop-color="#1a36c4"/></linearGradient></defs><path d="M4.500 1.500h7l3 3V15h-10z" fill="url(#tg)" stroke="#7c9ce0" stroke-width="1"/><path d="M9.500 9h3.500v4.500H9.500z" fill="#dfe8fa" opacity="0.800"/><path d="M1 3.500h8v5H6.500l-1.800 2.400V8.500H1z" fill="#f8d020" stroke="#c88a10" stroke-width="0.800"/></svg>
<div class="t " style="left:682px;top:1585px;">Using Print Preview</div>
<div class="a" style="left:435px;top:1741.5px;width:62px;height:8px;background:rgba(96,96,96,0.72);"></div>
<svg style="left:485px;top:1708.5px" width="68" height="68" viewBox="0 0 16 16"><path d="M2 8.500l4 5.500L14 1.500" fill="none" stroke="#0cc41c" stroke-width="3.400"/></svg>
<svg style="left:558.5px;top:1691px" width="105" height="105" viewBox="0 0 16 16"><rect x="2.500" y="1.500" width="11.500" height="13.500" fill="#f6f8fd" stroke="#46609c" stroke-width="1.100"/><path d="M6 6.500c0-3 4.600-3 4.600-.2 0 1.800-2.300 1.700-2.300 3.600M8.300 11.500v1.400" stroke="#16307a" stroke-width="1.400" fill="none"/></svg>
<div class="t " style="left:682px;top:1697.5px;">Print Preview</div>
<div class="a" style="left:435px;top:1854px;width:62px;height:8px;background:rgba(96,96,96,0.72);"></div>
<svg style="left:485px;top:1821px" width="68" height="68" viewBox="0 0 16 16"><path d="M2 8.500l4 5.500L14 1.500" fill="none" stroke="#0cc41c" stroke-width="3.400"/></svg>
<svg style="left:558.5px;top:1803.5px" width="105" height="105" viewBox="0 0 16 16"><defs><linearGradient id="tg" x1="0" y1="0" x2="1" y2="1"><stop offset="0.250" stop-color="#eef3fc"/><stop offset="0.600" stop-color="#3a62e4"/><stop offset="1" stop-color="#1a36c4"/></linearGradient></defs><path d="M4.500 1.500h7l3 3V15h-10z" fill="url(#tg)" stroke="#7c9ce0" stroke-width="1"/><path d="M9.500 9h3.500v4.500H9.500z" fill="#dfe8fa" opacity="0.800"/><path d="M1 3.500h8v5H6.500l-1.800 2.400V8.500H1z" fill="#f8d020" stroke="#c88a10" stroke-width="0.800"/></svg>
<div class="t " style="left:682px;top:1810px;">Changing the Page Setup</div>
<div class="a" style="left:435px;top:1966.5px;width:62px;height:8px;background:rgba(96,96,96,0.72);"></div>
<svg style="left:485px;top:1933.5px" width="68" height="68" viewBox="0 0 16 16"><path d="M2 8.500l4 5.500L14 1.500" fill="none" stroke="#0cc41c" stroke-width="3.400"/></svg>
<svg style="left:558.5px;top:1916px" width="105" height="105" viewBox="0 0 16 16"><defs><linearGradient id="tg" x1="0" y1="0" x2="1" y2="1"><stop offset="0.250" stop-color="#eef3fc"/><stop offset="0.600" stop-color="#3a62e4"/><stop offset="1" stop-color="#1a36c4"/></linearGradient></defs><path d="M4.500 1.500h7l3 3V15h-10z" fill="url(#tg)" stroke="#7c9ce0" stroke-width="1"/><path d="M9.500 9h3.500v4.500H9.500z" fill="#dfe8fa" opacity="0.800"/><path d="M1 3.500h8v5H6.500l-1.800 2.400V8.500H1z" fill="#f8d020" stroke="#c88a10" stroke-width="0.800"/></svg>
<div class="t" style="left:670px;top:1915.5px;height:108px;line-height:114px;background:#316ac5;color:#fff;padding:0 36px 0 14px;">Printing a Document</div>
<div class="a" style="left:435px;top:2079px;width:62px;height:8px;background:rgba(96,96,96,0.72);"></div>
<svg style="left:485px;top:2046px" width="68" height="68" viewBox="0 0 16 16"><path d="M2 8.500l4 5.500L14 1.500" fill="none" stroke="#0cc41c" stroke-width="3.400"/></svg>
<svg style="left:558.5px;top:2028.5px" width="105" height="105" viewBox="0 0 16 16"><path d="M3.500 1.500h7l3 3V15h-10z" fill="#eef3fd" stroke="#7c9ce0" stroke-width="1"/><path d="M10.500 1.500v3h3" fill="none" stroke="#7c9ce0" stroke-width="0.800"/><rect x="5" y="5.500" width="7" height="6.500" fill="#2a4ae0"/><path d="M5 7.500h7M5 13.300h6" stroke="#cfdcfa" stroke-width="0.700"/></svg>
<div class="t " style="left:682px;top:2035px;">Templates</div>
<div class="a" style="left:435px;top:2191.5px;width:62px;height:8px;background:rgba(96,96,96,0.72);"></div>
<svg style="left:485px;top:2158.5px" width="68" height="68" viewBox="0 0 16 16"><path d="M2 8.500l4 5.500L14 1.500" fill="none" stroke="#0cc41c" stroke-width="3.400"/></svg>
<svg style="left:558.5px;top:2141px" width="105" height="105" viewBox="0 0 16 16"><defs><linearGradient id="tg" x1="0" y1="0" x2="1" y2="1"><stop offset="0.250" stop-color="#eef3fc"/><stop offset="0.600" stop-color="#3a62e4"/><stop offset="1" stop-color="#1a36c4"/></linearGradient></defs><path d="M4.500 1.500h7l3 3V15h-10z" fill="url(#tg)" stroke="#7c9ce0" stroke-width="1"/><path d="M9.500 9h3.500v4.500H9.500z" fill="#dfe8fa" opacity="0.800"/><path d="M1 3.500h8v5H6.500l-1.800 2.400V8.500H1z" fill="#f8d020" stroke="#c88a10" stroke-width="0.800"/></svg>
<div class="t " style="left:682px;top:2147.5px;">Exiting WordPad</div>
<div class="a" style="left:350px;top:2304px;width:36px;height:8px;background:rgba(96,96,96,0.72);"></div>
<svg style="left:296px;top:2280px" width="56" height="56" viewBox="0 0 9 9"><defs><linearGradient id="eg" x1="0" y1="0" x2="1" y2="1"><stop offset="0" stop-color="#fff"/><stop offset="1" stop-color="#c8c4b4"/></linearGradient></defs><rect x="0.5" y="0.5" width="8" height="8" rx="1" fill="url(#eg)" stroke="#8a9cb8" stroke-width="1"/><path d="M2.2 4.5h4.6" stroke="#000" stroke-width="1.5"/></svg>
<svg style="left:374px;top:2271px" width="68" height="68" viewBox="0 0 16 16"><path d="M2 8.500l4 5.500L14 1.500" fill="none" stroke="#0cc41c" stroke-width="3.400"/></svg>
<svg style="left:448px;top:2254px" width="104" height="104" viewBox="0 0 16 16"><path d="M2 3.600q3-2.200 6 .4 3-2.600 6-.4v8.400q-3-1.500-6 1-3-2.500-6-1z" fill="#f2f6fc" stroke="#2e6ad0" stroke-width="1.700"/><path d="M2 3.600q3-2.200 6 .4v9q-3-2.500-6-1z" fill="#4c8ae4" stroke="#2e6ad0" stroke-width="1"/><path d="M4 4.500v7" stroke="#dce8fa" stroke-width="1"/><path d="M2 13.300q3-1.500 6 1 3-2.500 6-1" stroke="#1a3a98" stroke-width="1.300" fill="none"/></svg>
<div class="t " style="left:571px;top:2260px;">Saving Documents</div>
<div class="a" style="left:435px;top:2416.5px;width:62px;height:8px;background:rgba(96,96,96,0.72);"></div>
<svg style="left:485px;top:2383.5px" width="68" height="68" viewBox="0 0 16 16"><path d="M2 8.500l4 5.500L14 1.500" fill="none" stroke="#0cc41c" stroke-width="3.400"/></svg>
<svg style="left:558.5px;top:2366px" width="105" height="105" viewBox="0 0 16 16"><defs><linearGradient id="tg" x1="0" y1="0" x2="1" y2="1"><stop offset="0.250" stop-color="#eef3fc"/><stop offset="0.600" stop-color="#3a62e4"/><stop offset="1" stop-color="#1a36c4"/></linearGradient></defs><path d="M4.500 1.500h7l3 3V15h-10z" fill="url(#tg)" stroke="#7c9ce0" stroke-width="1"/><path d="M9.500 9h3.500v4.500H9.500z" fill="#dfe8fa" opacity="0.800"/><path d="M1 3.500h8v5H6.500l-1.800 2.400V8.500H1z" fill="#f8d020" stroke="#c88a10" stroke-width="0.800"/></svg>
<div class="t " style="left:682px;top:2372.5px;">Saving a Document as a New File</div>
<div class="a" style="left:435px;top:2529px;width:62px;height:8px;background:rgba(96,96,96,0.72);"></div>
<svg style="left:485px;top:2496px" width="68" height="68" viewBox="0 0 16 16"><path d="M2 8.500l4 5.500L14 1.500" fill="none" stroke="#0cc41c" stroke-width="3.400"/></svg>
<svg style="left:558.5px;top:2478.5px" width="105" height="105" viewBox="0 0 16 16"><rect x="2.500" y="1.500" width="11.500" height="13.500" fill="#f6f8fd" stroke="#46609c" stroke-width="1.100"/><path d="M6 6.500c0-3 4.600-3 4.600-.2 0 1.800-2.300 1.700-2.300 3.600M8.300 11.500v1.400" stroke="#16307a" stroke-width="1.400" fill="none"/></svg>
<div class="t " style="left:682px;top:2485px;">Saving a Document</div>
<div class="a" style="left:435px;top:2641.5px;width:62px;height:8px;background:rgba(96,96,96,0.72);"></div>
<svg style="left:485px;top:2608.5px" width="68" height="68" viewBox="0 0 16 16"><path d="M2 8.500l4 5.500L14 1.500" fill="none" stroke="#0cc41c" stroke-width="3.400"/></svg>
<svg style="left:558.5px;top:2591px" width="105" height="105" viewBox="0 0 16 16"><path d="M4.500 1.500h7l3 3V15h-10z" fill="#f4f7fd" stroke="#9ab4e4" stroke-width="1"/><path d="M11.500 1.500v3h3" fill="none" stroke="#9ab4e4" stroke-width="0.800"/><path d="M1 3.500h8v5H6.500l-1.800 2.400V8.500H1z" fill="#f8d020" stroke="#c88a10" stroke-width="0.800"/></svg>
<div class="t " style="left:682px;top:2597.5px;">Saving a Text File</div>
<div class="a" style="left:324px;top:2754px;width:62px;height:8px;background:rgba(96,96,96,0.72);"></div>
<svg style="left:374px;top:2721px" width="68" height="68" viewBox="0 0 16 16"><path d="M2 8.500l4 5.500L14 1.500" fill="none" stroke="#0cc41c" stroke-width="3.400"/></svg>
<svg style="left:447.5px;top:2703.5px" width="105" height="105" viewBox="0 0 16 16"><path d="M3.500 1.500h7l3 3V15h-10z" fill="#eef3fd" stroke="#7c9ce0" stroke-width="1"/><path d="M10.500 1.500v3h3" fill="none" stroke="#7c9ce0" stroke-width="0.800"/><rect x="5" y="5.500" width="7" height="6.500" fill="#2a4ae0"/><path d="M5 7.500h7M5 13.300h6" stroke="#cfdcfa" stroke-width="0.700"/></svg>
<div class="t " style="left:571px;top:2710px;">Document Security</div>
<div class="a" style="left:324px;top:2866.5px;width:62px;height:8px;background:rgba(96,96,96,0.72);"></div>
<svg style="left:374px;top:2833.5px" width="68" height="68" viewBox="0 0 16 16"><path d="M2 8.500l4 5.500L14 1.500" fill="none" stroke="#0cc41c" stroke-width="3.400"/></svg>
<svg style="left:447.5px;top:2816px" width="105" height="105" viewBox="0 0 16 16"><rect x="2.500" y="2.500" width="11" height="12.500" fill="#dfe8f8" stroke="#46609c" stroke-width="1"/><path d="M9 1l5 .5-1 4.500" fill="#f6f8fd" stroke="#46609c" stroke-width="0.800"/><path d="M6 7.500c0-2.600 4-2.600 4-.2 0 1.600-2 1.500-2 3.200M8 12v1.200" stroke="#16307a" stroke-width="1.300" fill="none"/></svg>
<div class="t " style="left:571px;top:2822.5px;">Assessment - Document Basics</div>
<div class="a" style="left:239px;top:2979px;width:36px;height:8px;background:rgba(96,96,96,0.72);"></div>
<svg style="left:185px;top:2955px" width="56" height="56" viewBox="0 0 9 9"><defs><linearGradient id="eg" x1="0" y1="0" x2="1" y2="1"><stop offset="0" stop-color="#fff"/><stop offset="1" stop-color="#c8c4b4"/></linearGradient></defs><rect x="0.5" y="0.5" width="8" height="8" rx="1" fill="url(#eg)" stroke="#8a9cb8" stroke-width="1"/><path d="M2.2 4.5h4.6" stroke="#000" stroke-width="1.5"/></svg>
<svg style="left:263px;top:2946px" width="68" height="68" viewBox="0 0 16 16"><path d="M2 8.500l4 5.500L14 1.500" fill="none" stroke="#0cc41c" stroke-width="3.400"/></svg>
<svg style="left:337px;top:2929px" width="104" height="104" viewBox="0 0 16 16"><path d="M2 3.6q3-2.2 6 .4 3-2.600 6-.4v8.400q-3-1.500-6 1-3-2.500-6-1z" fill="#f1eaf5" stroke="#a42cb6" stroke-width="1.900"/><path d="M8 4v9" stroke="#a42cb6" stroke-width="1.300"/><path d="M2 13.300q3-1.500 6 1 3-2.500 6-1" stroke="#24104e" stroke-width="1.500" fill="none"/></svg>
<div class="t " style="left:460px;top:2935px;">Applying Formatting</div>
<div class="a" style="left:350px;top:3091.5px;width:100px;height:8px;background:rgba(96,96,96,0.72);"></div>
<svg style="left:296px;top:3067.5px" width="56" height="56" viewBox="0 0 9 9"><defs><linearGradient id="eg" x1="0" y1="0" x2="1" y2="1"><stop offset="0" stop-color="#fff"/><stop offset="1" stop-color="#c8c4b4"/></linearGradient></defs><rect x="0.5" y="0.5" width="8" height="8" rx="1" fill="url(#eg)" stroke="#8a9cb8" stroke-width="1"/><path d="M2.2 4.5h4.6" stroke="#000" stroke-width="1.5"/></svg>
<svg style="left:448px;top:3041.5px" width="104" height="104" viewBox="0 0 16 16"><path d="M2 3.600q3-2.200 6 .4 3-2.600 6-.4v8.400q-3-1.500-6 1-3-2.500-6-1z" fill="#f2f6fc" stroke="#2e6ad0" stroke-width="1.700"/><path d="M2 3.600q3-2.200 6 .4v9q-3-2.500-6-1z" fill="#4c8ae4" stroke="#2e6ad0" stroke-width="1"/><path d="M4 4.500v7" stroke="#dce8fa" stroke-width="1"/><path d="M2 13.300q3-1.500 6 1 3-2.500 6-1" stroke="#1a3a98" stroke-width="1.300" fill="none"/></svg>
<div class="t " style="left:571px;top:3047.5px;">Formatting Text</div>
<div class="a" style="left:435px;top:3204px;width:126px;height:8px;background:rgba(96,96,96,0.72);"></div>
<svg style="left:558.5px;top:3153.5px" width="105" height="105" viewBox="0 0 16 16"><defs><linearGradient id="tg" x1="0" y1="0" x2="1" y2="1"><stop offset="0.250" stop-color="#eef3fc"/><stop offset="0.600" stop-color="#3a62e4"/><stop offset="1" stop-color="#1a36c4"/></linearGradient></defs><path d="M4.500 1.500h7l3 3V15h-10z" fill="url(#tg)" stroke="#7c9ce0" stroke-width="1"/><path d="M9.500 9h3.500v4.500H9.500z" fill="#dfe8fa" opacity="0.800"/><path d="M1 3.500h8v5H6.500l-1.800 2.400V8.500H1z" fill="#f8d020" stroke="#c88a10" stroke-width="0.800"/></svg>
<div class="t " style="left:682px;top:3160px;">Selecting Text</div>
<div class="a" style="left:435px;top:3316.5px;width:126px;height:8px;background:rgba(96,96,96,0.72);"></div>
<svg style="left:558.5px;top:3266px" width="105" height="105" viewBox="0 0 16 16"><defs><linearGradient id="tg" x1="0" y1="0" x2="1" y2="1"><stop offset="0.250" stop-color="#eef3fc"/><stop offset="0.600" stop-color="#3a62e4"/><stop offset="1" stop-color="#1a36c4"/></linearGradient></defs><path d="M4.500 1.500h7l3 3V15h-10z" fill="url(#tg)" stroke="#7c9ce0" stroke-width="1"/><path d="M9.500 9h3.500v4.500H9.500z" fill="#dfe8fa" opacity="0.800"/><path d="M1 3.500h8v5H6.500l-1.800 2.400V8.500H1z" fill="#f8d020" stroke="#c88a10" stroke-width="0.800"/></svg>
<div class="t " style="left:682px;top:3272.5px;">Changing Fonts</div>
<div class="a" style="left:350px;top:3429px;width:36px;height:8px;background:rgba(96,96,96,0.72);"></div>
<svg style="left:296px;top:3405px" width="56" height="56" viewBox="0 0 9 9"><defs><linearGradient id="eg" x1="0" y1="0" x2="1" y2="1"><stop offset="0" stop-color="#fff"/><stop offset="1" stop-color="#c8c4b4"/></linearGradient></defs><rect x="0.5" y="0.5" width="8" height="8" rx="1" fill="url(#eg)" stroke="#8a9cb8" stroke-width="1"/><path d="M2.2 4.5h4.6" stroke="#000" stroke-width="1.5"/></svg>
<svg style="left:374px;top:3396px" width="68" height="68" viewBox="0 0 16 16"><path d="M2 8.500l4 5.500L14 1.500" fill="none" stroke="#0cc41c" stroke-width="3.400"/></svg>
<svg style="left:448px;top:3379px" width="104" height="104" viewBox="0 0 16 16"><path d="M2 3.600q3-2.200 6 .4 3-2.600 6-.4v8.400q-3-1.500-6 1-3-2.500-6-1z" fill="#f2f6fc" stroke="#2e6ad0" stroke-width="1.700"/><path d="M2 3.600q3-2.200 6 .4v9q-3-2.500-6-1z" fill="#4c8ae4" stroke="#2e6ad0" stroke-width="1"/><path d="M4 4.500v7" stroke="#dce8fa" stroke-width="1"/><path d="M2 13.300q3-1.500 6 1 3-2.500 6-1" stroke="#1a3a98" stroke-width="1.300" fill="none"/></svg>
<div class="t " style="left:571px;top:3385px;">Formatting Paragraphs</div>
<div class="a" style="left:435px;top:3541.5px;width:62px;height:8px;background:rgba(96,96,96,0.72);"></div>
<svg style="left:485px;top:3508.5px" width="68" height="68" viewBox="0 0 16 16"><path d="M2 8.500l4 5.500L14 1.500" fill="none" stroke="#0cc41c" stroke-width="3.400"/></svg>
<svg style="left:558.5px;top:3491px" width="105" height="105" viewBox="0 0 16 16"><path d="M4.500 1.500h7l3 3V15h-10z" fill="#f4f7fd" stroke="#9ab4e4" stroke-width="1"/><path d="M11.500 1.500v3h3" fill="none" stroke="#9ab4e4" stroke-width="0.800"/><path d="M1 3.500h8v5H6.500l-1.800 2.400V8.500H1z" fill="#f8d020" stroke="#c88a10" stroke-width="0.800"/></svg>
<div class="t " style="left:682px;top:3497.5px;">Selecting Paragraph Text</div>
<div class="a" style="left:435px;top:3654px;width:126px;height:8px;background:rgba(96,96,96,0.72);"></div>
<svg style="left:558.5px;top:3603.5px" width="105" height="105" viewBox="0 0 16 16"><defs><linearGradient id="tg" x1="0" y1="0" x2="1" y2="1"><stop offset="0.250" stop-color="#eef3fc"/><stop offset="0.600" stop-color="#3a62e4"/><stop offset="1" stop-color="#1a36c4"/></linearGradient></defs><path d="M4.500 1.500h7l3 3V15h-10z" fill="url(#tg)" stroke="#7c9ce0" stroke-width="1"/><path d="M9.500 9h3.500v4.500H9.500z" fill="#dfe8fa" opacity="0.800"/><path d="M1 3.500h8v5H6.500l-1.800 2.400V8.500H1z" fill="#f8d020" stroke="#c88a10" stroke-width="0.800"/></svg>
<div class="t " style="left:682px;top:3610px;">Centering a Paragraph</div>
<div class="a" style="left:239px;top:3766.5px;width:36px;height:8px;background:rgba(96,96,96,0.72);"></div>
<svg style="left:185px;top:3742.5px" width="56" height="56" viewBox="0 0 9 9"><defs><linearGradient id="eg" x1="0" y1="0" x2="1" y2="1"><stop offset="0" stop-color="#fff"/><stop offset="1" stop-color="#c8c4b4"/></linearGradient></defs><rect x="0.5" y="0.5" width="8" height="8" rx="1" fill="url(#eg)" stroke="#8a9cb8" stroke-width="1"/><path d="M2.2 4.5h4.6" stroke="#000" stroke-width="1.5"/></svg>
<svg style="left:263px;top:3733.5px" width="68" height="68" viewBox="0 0 16 16"><path d="M2 8.500l4 5.500L14 1.500" fill="none" stroke="#0cc41c" stroke-width="3.400"/></svg>
<svg style="left:337px;top:3716.5px" width="104" height="104" viewBox="0 0 16 16"><path d="M2 3.6q3-2.2 6 .4 3-2.600 6-.4v8.400q-3-1.500-6 1-3-2.500-6-1z" fill="#f1eaf5" stroke="#a42cb6" stroke-width="1.900"/><path d="M8 4v9" stroke="#a42cb6" stroke-width="1.300"/><path d="M2 13.300q3-1.500 6 1 3-2.500 6-1" stroke="#24104e" stroke-width="1.500" fill="none"/></svg>
<div class="t " style="left:460px;top:3722.5px;">Editing Basics</div>
<div class="a" style="left:350px;top:3879px;width:36px;height:8px;background:rgba(96,96,96,0.72);"></div>
<svg style="left:296px;top:3855px" width="56" height="56" viewBox="0 0 9 9"><defs><linearGradient id="eg" x1="0" y1="0" x2="1" y2="1"><stop offset="0" stop-color="#fff"/><stop offset="1" stop-color="#c8c4b4"/></linearGradient></defs><rect x="0.5" y="0.5" width="8" height="8" rx="1" fill="url(#eg)" stroke="#8a9cb8" stroke-width="1"/><path d="M2 4.5h5M4.5 2v5" stroke="#000" stroke-width="1.25"/></svg>
<svg style="left:374px;top:3846px" width="68" height="68" viewBox="0 0 16 16"><path d="M2 8.500l4 5.500L14 1.500" fill="none" stroke="#0cc41c" stroke-width="3.400"/></svg>
<svg style="left:445px;top:3826px" width="110" height="110" viewBox="0 0 16 16"><path d="M1.500 6L8.500 1 15 6 8 11.500z" fill="#2c90fa" stroke="#0c2c98" stroke-width="0.900"/><path d="M1.500 6L8 11.500V15L1.500 9.500z" fill="#0a1c84" stroke="#0a1c84" stroke-width="0.800"/><path d="M8 11.500L15 6v3.500L8 15z" fill="#f4f6fa" stroke="#0a1c84" stroke-width="0.800"/></svg>
<div class="t " style="left:571px;top:3835px;">Views and Toolbars</div>
<div class="a" style="left:350px;top:3991.5px;width:36px;height:8px;background:rgba(96,96,96,0.72);"></div>
<svg style="left:296px;top:3967.5px" width="56" height="56" viewBox="0 0 9 9"><defs><linearGradient id="eg" x1="0" y1="0" x2="1" y2="1"><stop offset="0" stop-color="#fff"/><stop offset="1" stop-color="#c8c4b4"/></linearGradient></defs><rect x="0.5" y="0.5" width="8" height="8" rx="1" fill="url(#eg)" stroke="#8a9cb8" stroke-width="1"/><path d="M2 4.5h5M4.5 2v5" stroke="#000" stroke-width="1.25"/></svg>
<svg style="left:374px;top:3958.5px" width="68" height="68" viewBox="0 0 16 16"><path d="M2 8.500l4 5.500L14 1.500" fill="none" stroke="#0cc41c" stroke-width="3.400"/></svg>
<svg style="left:445px;top:3938.5px" width="110" height="110" viewBox="0 0 16 16"><path d="M1.500 6L8.500 1 15 6 8 11.500z" fill="#2c90fa" stroke="#0c2c98" stroke-width="0.900"/><path d="M1.500 6L8 11.500V15L1.500 9.500z" fill="#0a1c84" stroke="#0a1c84" stroke-width="0.800"/><path d="M8 11.500L15 6v3.500L8 15z" fill="#f4f6fa" stroke="#0a1c84" stroke-width="0.800"/></svg>
<div class="t " style="left:571px;top:3947.5px;">Lists</div>
<div class="a" style="left:350px;top:4104px;width:36px;height:8px;background:rgba(96,96,96,0.72);"></div>
<svg style="left:296px;top:4080px" width="56" height="56" viewBox="0 0 9 9"><defs><linearGradient id="eg" x1="0" y1="0" x2="1" y2="1"><stop offset="0" stop-color="#fff"/><stop offset="1" stop-color="#c8c4b4"/></linearGradient></defs><rect x="0.5" y="0.5" width="8" height="8" rx="1" fill="url(#eg)" stroke="#8a9cb8" stroke-width="1"/><path d="M2 4.5h5M4.5 2v5" stroke="#000" stroke-width="1.25"/></svg>
<svg style="left:374px;top:4071px" width="68" height="68" viewBox="0 0 16 16"><path d="M2 8.500l4 5.500L14 1.500" fill="none" stroke="#0cc41c" stroke-width="3.400"/></svg>
<svg style="left:445px;top:4051px" width="110" height="110" viewBox="0 0 16 16"><path d="M1.500 6L8.500 1 15 6 8 11.500z" fill="#2c90fa" stroke="#0c2c98" stroke-width="0.900"/><path d="M1.500 6L8 11.500V15L1.500 9.500z" fill="#0a1c84" stroke="#0a1c84" stroke-width="0.800"/><path d="M8 11.500L15 6v3.500L8 15z" fill="#f4f6fa" stroke="#0a1c84" stroke-width="0.800"/></svg>
<div class="t " style="left:571px;top:4060px;">Inserting Dates and Objects</div>
<div class="a" style="left:4703px;top:646px;width:1659px;height:3962px;background:#ece9d8;"></div>
<div class="a" style="left:4703px;top:646px;width:1659px;height:110px;background:linear-gradient(to right,#6f8fdc,#7f9ee2);"></div>
<div class="t " style="left:4730px;top:656px;color:#d4e0f8">Properties</div>
<svg style="left:6175px;top:665px" width="50" height="70" viewBox="0 0 7 10"><path d="M1.500 0.500h4M2.300 0.500v4.500M4.800 0.500v4.500M0.500 5.500h6M3.500 5.500v4" stroke="#fff" stroke-width="1" fill="none"/></svg>
<svg style="left:6265px;top:675px" width="54" height="54" viewBox="0 0 8 8"><path d="M0.800 0.800L7.200 7.200M7.200 0.800L0.800 7.200" stroke="#fff" stroke-width="1.700"/></svg>
<div class="a" style="left:4703px;top:919px;width:1659px;height:7px;background:#c8c5b4;"></div>
<div class="a" style="left:4736px;top:795px;width:38px;height:38px;border:5px solid #a8a8a0;box-sizing:border-box;background:#f4f3ea;"></div>
<div class="a" style="left:4785px;top:800px;width:26px;height:28px;background:#d4d2c4;"></div>
<div class="a" style="left:4736px;top:853px;width:38px;height:38px;border:5px solid #a8a8a0;box-sizing:border-box;background:#f4f3ea;"></div>
<div class="a" style="left:4785px;top:858px;width:26px;height:28px;background:#d4d2c4;"></div>
<div class="t" style="left:4870px;top:774px;font-size:56px;font-weight:bold;color:#2a50c0;line-height:60px;height:60px;">A</div>
<div class="t" style="left:4872px;top:834px;font-size:56px;font-weight:bold;color:#b03030;line-height:60px;height:60px;">Z</div>
<svg style="left:4924px;top:784px" width="40" height="105" viewBox="0 0 4 11"><path d="M2 0v8" stroke="#111" stroke-width="0.900"/><path d="M0.200 7.500h3.600L2 11z" fill="#111"/></svg>
<div class="a" style="left:4709px;top:929px;width:1647px;height:2755px;background:#fff;"></div>
<div class="a" style="left:4709px;top:927px;width:1647px;height:110.1px;background:#ece9d8;"></div>
<svg style="left:4738px;top:951.1px" width="56" height="56" viewBox="0 0 9 9"><defs><linearGradient id="eg" x1="0" y1="0" x2="1" y2="1"><stop offset="0" stop-color="#fff"/><stop offset="1" stop-color="#c8c4b4"/></linearGradient></defs><rect x="0.5" y="0.5" width="8" height="8" rx="1" fill="url(#eg)" stroke="#8a9cb8" stroke-width="1"/><path d="M2 4.5h5M4.5 2v5" stroke="#000" stroke-width="1.25"/></svg>
<div class="t b" style="left:4848px;top:938.05px;font-size:73px;letter-spacing:0.4px;-webkit-text-stroke:1px #000">General</div>
<div class="a" style="left:4709px;top:1033.1px;width:1647px;height:110.1px;background:#ece9d8;"></div>
<svg style="left:4738px;top:1057.1px" width="56" height="56" viewBox="0 0 9 9"><defs><linearGradient id="eg" x1="0" y1="0" x2="1" y2="1"><stop offset="0" stop-color="#fff"/><stop offset="1" stop-color="#c8c4b4"/></linearGradient></defs><rect x="0.5" y="0.5" width="8" height="8" rx="1" fill="url(#eg)" stroke="#8a9cb8" stroke-width="1"/><path d="M2 4.5h5M4.5 2v5" stroke="#000" stroke-width="1.25"/></svg>
<div class="t b" style="left:4848px;top:1044.15px;font-size:73px;letter-spacing:0.4px;-webkit-text-stroke:1px #000">Instructor Manual</div>
<div class="a" style="left:4709px;top:1139.2px;width:1647px;height:110.1px;background:#ece9d8;"></div>
<svg style="left:4738px;top:1163.3px" width="56" height="56" viewBox="0 0 9 9"><defs><linearGradient id="eg" x1="0" y1="0" x2="1" y2="1"><stop offset="0" stop-color="#fff"/><stop offset="1" stop-color="#c8c4b4"/></linearGradient></defs><rect x="0.5" y="0.5" width="8" height="8" rx="1" fill="url(#eg)" stroke="#8a9cb8" stroke-width="1"/><path d="M2 4.5h5M4.5 2v5" stroke="#000" stroke-width="1.25"/></svg>
<div class="t b" style="left:4848px;top:1150.25px;font-size:73px;letter-spacing:0.4px;-webkit-text-stroke:1px #000">Job Aid</div>
<div class="a" style="left:4709px;top:1245.3px;width:1647px;height:110.1px;background:#ece9d8;"></div>
<svg style="left:4738px;top:1269.3px" width="56" height="56" viewBox="0 0 9 9"><defs><linearGradient id="eg" x1="0" y1="0" x2="1" y2="1"><stop offset="0" stop-color="#fff"/><stop offset="1" stop-color="#c8c4b4"/></linearGradient></defs><rect x="0.5" y="0.5" width="8" height="8" rx="1" fill="url(#eg)" stroke="#8a9cb8" stroke-width="1"/><path d="M2 4.5h5M4.5 2v5" stroke="#000" stroke-width="1.25"/></svg>
<div class="t b" style="left:4848px;top:1256.35px;font-size:73px;letter-spacing:0.4px;-webkit-text-stroke:1px #000">System Process Document</div>
<div class="a" style="left:4709px;top:1351.4px;width:1647px;height:110.1px;background:#ece9d8;"></div>
<svg style="left:4738px;top:1375.4px" width="56" height="56" viewBox="0 0 9 9"><defs><linearGradient id="eg" x1="0" y1="0" x2="1" y2="1"><stop offset="0" stop-color="#fff"/><stop offset="1" stop-color="#c8c4b4"/></linearGradient></defs><rect x="0.5" y="0.5" width="8" height="8" rx="1" fill="url(#eg)" stroke="#8a9cb8" stroke-width="1"/><path d="M2 4.5h5M4.5 2v5" stroke="#000" stroke-width="1.25"/></svg>
<div class="t b" style="left:4848px;top:1362.45px;font-size:73px;letter-spacing:0.4px;-webkit-text-stroke:1px #000">Test Document</div>
<div class="a" style="left:4709px;top:1457.5px;width:1647px;height:110.1px;background:#ece9d8;"></div>
<svg style="left:4738px;top:1481.5px" width="56" height="56" viewBox="0 0 9 9"><defs><linearGradient id="eg" x1="0" y1="0" x2="1" y2="1"><stop offset="0" stop-color="#fff"/><stop offset="1" stop-color="#c8c4b4"/></linearGradient></defs><rect x="0.5" y="0.5" width="8" height="8" rx="1" fill="url(#eg)" stroke="#8a9cb8" stroke-width="1"/><path d="M2.2 4.5h4.6" stroke="#000" stroke-width="1.5"/></svg>
<div class="t b" style="left:4848px;top:1468.55px;font-size:73px;letter-spacing:0.4px;-webkit-text-stroke:1px #000">Topic</div>
<div class="a" style="left:4709px;top:1565.6px;width:110px;height:106.1px;background:#ece9d8;"></div>
<div class="a" style="left:4820px;top:1665.7px;width:1536px;height:6px;background:#ece9d8;"></div>
<div class="a" style="left:5502px;top:1565.6px;width:7px;height:106.1px;background:#ece9d8;"></div>
<div class="t " style="left:4849px;top:1574.65px;">Know It Remediation</div>
<div class="t " style="left:5533px;top:1574.65px;">Level 1, Level 2, Level 3</div>
<div class="a" style="left:4709px;top:1671.7px;width:110px;height:106.1px;background:#ece9d8;"></div>
<div class="a" style="left:4820px;top:1671.7px;width:680px;height:106.1px;background:#ece9d8;"></div>
<div class="a" style="left:4820px;top:1771.8px;width:1536px;height:6px;background:#ece9d8;"></div>
<div class="a" style="left:5502px;top:1671.7px;width:7px;height:106.1px;background:#ece9d8;"></div>
<div class="t " style="left:4849px;top:1680.75px;">Know It Required %</div>
<div class="a" style="left:4709px;top:1777.8px;width:110px;height:106.1px;background:#ece9d8;"></div>
<div class="a" style="left:4820px;top:1877.9px;width:1536px;height:6px;background:#ece9d8;"></div>
<div class="a" style="left:5502px;top:1777.8px;width:7px;height:106.1px;background:#ece9d8;"></div>
<div class="t " style="left:4849px;top:1786.85px;">LMS Play Modes</div>
<div class="t " style="left:5533px;top:1786.85px;letter-spacing:2.2px">See It!, Try It!, Know It?</div>
<div class="a" style="left:4709px;top:1883.9px;width:110px;height:106.1px;background:#ece9d8;"></div>
<div class="a" style="left:4820px;top:1984px;width:1536px;height:6px;background:#ece9d8;"></div>
<div class="a" style="left:5502px;top:1883.9px;width:7px;height:106.1px;background:#ece9d8;"></div>
<div class="t " style="left:4849px;top:1892.95px;">Play Modes</div>
<div class="a" style="left:4709px;top:1990px;width:110px;height:106.1px;background:#ece9d8;"></div>
<div class="a" style="left:4820px;top:2090.1px;width:1536px;height:6px;background:#ece9d8;"></div>
<div class="a" style="left:5502px;top:1990px;width:7px;height:106.1px;background:#ece9d8;"></div>
<div class="t " style="left:4849px;top:1999.05px;">Play Sound</div>
<div class="a" style="left:4709px;top:2096.1px;width:110px;height:106.1px;background:#ece9d8;"></div>
<div class="a" style="left:4820px;top:2196.2px;width:1536px;height:6px;background:#ece9d8;"></div>
<div class="a" style="left:5502px;top:2096.1px;width:7px;height:106.1px;background:#ece9d8;"></div>
<div class="t " style="left:4849px;top:2105.15px;">Show Bubbles</div>
<div class="t " style="left:5533px;top:2105.15px;">Use frame settings</div>
<div class="a" style="left:4709px;top:2200.2px;width:1647px;height:110.1px;background:#ece9d8;"></div>
<svg style="left:4738px;top:2224.2px" width="56" height="56" viewBox="0 0 9 9"><defs><linearGradient id="eg" x1="0" y1="0" x2="1" y2="1"><stop offset="0" stop-color="#fff"/><stop offset="1" stop-color="#c8c4b4"/></linearGradient></defs><rect x="0.5" y="0.5" width="8" height="8" rx="1" fill="url(#eg)" stroke="#8a9cb8" stroke-width="1"/><path d="M2 4.5h5M4.5 2v5" stroke="#000" stroke-width="1.25"/></svg>
<div class="t b" style="left:4848px;top:2211.25px;font-size:73px;letter-spacing:0.4px;-webkit-text-stroke:1px #000">Workflow</div>
<div class="a" style="left:4709px;top:3728px;width:1647px;height:7px;background:#c2bfae;"></div>
<div class="a" style="left:4709px;top:4312px;width:1647px;height:7px;background:#c2bfae;"></div>
<div class="t b" style="left:4739px;top:3765px;font-size:73px;letter-spacing:0.4px;-webkit-text-stroke:1px #000">Know It Required %</div>
<div class="t " style="left:4739px;top:3860px;">Percentage of steps that must be completed</div>
<div class="t " style="left:4739px;top:3944px;">correctly for a passing score.</div>
<div class="a" style="left:4709px;top:4332px;width:1647px;height:274px;background:#ece9d8;border-top:6px solid #d4d1c0;box-sizing:border-box;"></div>
<svg style="left:4740px;top:4366px" width="100" height="100" viewBox="0 0 16 16"><path d="M8 1L15.300 14.500H0.700z" fill="#fff200" stroke="#d8a000" stroke-width="0.700"/><path d="M1 15h14.500" stroke="#4a4a50" stroke-width="1.300"/><path d="M8 5.500v5M8 11.800v1.700" stroke="#0a0a30" stroke-width="2.200"/></svg>
<div class="t " style="left:4919px;top:4376px;letter-spacing:-0.2px">Changing any document properties will</div>
<div class="t " style="left:4919px;top:4458px;">overwrite the original values.</div>
<div class="a" style="left:6358px;top:646px;width:8px;height:3962px;background:#b8c8e0;"></div>
<div class="a" style="left:25px;top:4610px;width:6351px;height:149px;background:#ece9d8;"></div>
<div class="a" style="left:25px;top:4746px;width:6351px;height:11px;background:#fffbe0;"></div>
<div class="a" style="left:0px;top:4756px;width:6400px;height:44px;background:linear-gradient(to bottom,#0a2cd0 0%,#0622b8 62%,#2a72e0 72%,#2a78e4 100%);"></div>
<div class="a" style="left:0px;top:187.5px;width:25px;height:4572px;background:linear-gradient(to right,#0626d0,#0838dc 50%,#0a48e4);"></div>
<div class="a" style="left:6376px;top:187.5px;width:24px;height:4572px;background:linear-gradient(to right,#0a48e4,#0838dc 50%,#0626d0);"></div>
<div class="t " style="left:6048px;top:4651px;">Online</div>
<svg style="left:5919px;top:4643px" width="108" height="108" viewBox="0 0 16 16"><path d="M3 3.500q5-3.500 10.500-.5l1.500 2.500q-5 3-12 .500z" fill="#c4c8d0" stroke="#50545c" stroke-width="0.900"/><path d="M4.500 6.500l7.500 4M12 6.500l-7.500 4" stroke="#3c4048" stroke-width="1.500"/><path d="M1 10.500h14.500v3.500H1z" fill="#7a8090" stroke="#30343c" stroke-width="0.900"/><rect x="6" y="10" width="3.600" height="4" fill="#f4dc10"/><path d="M1.500 15h13" stroke="#8a8e98" stroke-width="0.800"/></svg>
<div class="a" style="left:6340px;top:4730px;width:12px;height:12px;background:#c4c1b0;"></div>
<div class="a" style="left:6315px;top:4730px;width:12px;height:12px;background:#c4c1b0;"></div>
<div class="a" style="left:6340px;top:4705px;width:12px;height:12px;background:#c4c1b0;"></div>
<div class="a" style="left:6290px;top:4730px;width:12px;height:12px;background:#c4c1b0;"></div>
<div class="a" style="left:6315px;top:4705px;width:12px;height:12px;background:#c4c1b0;"></div>
<div class="a" style="left:6340px;top:4680px;width:12px;height:12px;background:#c4c1b0;"></div>
</div></div></body></html>
